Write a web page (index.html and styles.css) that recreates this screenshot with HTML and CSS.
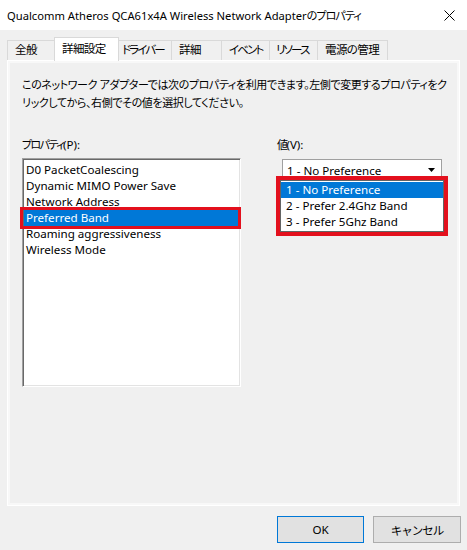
FILE: index.html
```html
<!DOCTYPE html>
<html lang="ja">
  <head>
    <meta charset="UTF-8" />
    <meta name="viewport" content="width=device-width, initial-scale=1.0" />
    <title>プロパティ</title>
    <link rel="stylesheet" href="styles.css">
  </head>
  <body>
    <div class="titlebar">
      <span class="title">Qualcomm Atheros QCA61x4A Wireless Network Adapter<span class="ja">のプロパティ</span></span>
      <svg class="close" width="11" height="11" viewBox="0 0 11 11">
        <path d="M0.5 0.5L10.5 10.5M10.5 0.5L0.5 10.5" stroke="#000" stroke-width="1" fill="none" />
      </svg>
    </div>
    <div class="dialog">
      <div class="tabs">
        <div class="tab tab-general">全般</div>
        <div class="tab tab-advanced active">詳細設定</div>
        <div class="tab tab-driver kana">ドライバー</div>
        <div class="tab tab-details">詳細</div>
        <div class="tab tab-events kana">イベント</div>
        <div class="tab tab-resources kana">リソース</div>
        <div class="tab tab-power">電源の管理</div>
      </div>
      <div class="panel">
        <p class="desc">このネットワーク アダプターでは次のプロパティを利用できます。左側で変更するプロパティをク<br>リックしてから、右側でその値を選択してください。</p>
        <div class="columns">
          <div class="col-left">
            <div class="label"><span class="ja">プロパティ</span>(P):</div>
            <ul class="listbox">
              <li>D0 PacketCoalescing</li>
              <li>Dynamic MIMO Power Save</li>
              <li>Network Address</li>
              <li class="selected">Preferred Band</li>
              <li>Roaming aggressiveness</li>
              <li>Wireless Mode</li>
            </ul>
          </div>
          <div class="col-right">
            <div class="label"><span class="ja">値</span>(V):</div>
            <div class="combo">
              <span class="combo-value">1 - No Preference</span>
              <svg class="arrow" width="7" height="4" viewBox="0 0 7 4">
                <path d="M0 0H7L3.5 4Z" fill="#000" />
              </svg>
              <ul class="dropdown">
                <li class="selected">1 - No Preference</li>
                <li>2 - Prefer 2.4Ghz Band</li>
                <li>3 - Prefer 5Ghz Band</li>
              </ul>
            </div>
          </div>
        </div>
      </div>
      <div class="buttons">
        <button class="btn btn-default">OK</button>
        <button class="btn ja">キャンセル</button>
      </div>
    </div>
  </body>
</html>
```

FILE: styles.css
```css
body {
  margin: 0;
  width: 467px;
  height: 550px;
  background-color: #f0f0f0;
  font-family: "Noto Sans", "Noto Sans CJK JP", sans-serif;
  font-size: 11.6px;
  font-feature-settings: "palt";
  color: #000;
  overflow: hidden;
}
.ja {
  font-size: 11px;
  letter-spacing: -0.9px;
}

.titlebar {
  display: flex;
  justify-content: space-between;
  align-items: center;
  height: 30px;
  padding: 0 12px 0 7px;
  background-color: #fff;
}
.title {
  font-size: 11.2px;
  white-space: nowrap;
}

.dialog {
  padding: 0 7px;
}

.tabs {
  display: flex;
  align-items: flex-end;
  height: 30px;
  position: relative;
  z-index: 1;
}
.tab {
  box-sizing: border-box;
  height: 20px;
  line-height: 18px;
  margin-right: -1px;
  padding-left: 7px;
  border: 1px solid #d9d9d9;
  border-bottom: none;
  background-color: #f0f0f0;
  font-size: 11.5px;
  letter-spacing: -0.6px;
  white-space: nowrap;
}
.tab.kana {
  letter-spacing: -1.9px;
}
.tab.active {
  height: 24px;
  line-height: 22px;
  margin-left: -3px;
  margin-right: -3px;
  margin-bottom: -1px;
  background-color: #fff;
  position: relative;
  z-index: 2;
}
.tab-general { width: 51px; }
.tab-advanced { width: 65px; }
.tab-driver { width: 56px; padding-left: 5px; }
.tab-details { width: 51px; }
.tab-events { width: 49px; }
.tab-resources { width: 49px; padding-left: 6px; }
.tab-power { width: 71px; }

.panel {
  box-sizing: border-box;
  height: 446px;
  padding: 15px 14px 0;
  border: 1px solid #fff;
  box-shadow: inset 0 0 0 2px #f8f8f8;
  background-color: #f0f0f0;
}
.desc {
  margin: 0;
  line-height: 18px;
  font-size: 11px;
  letter-spacing: -0.4px;
  white-space: nowrap;
}

.columns {
  display: flex;
  gap: 36px;
  margin-top: 24px;
}
.label {
  line-height: 18px;
}
.label .ja {
  letter-spacing: -1.6px;
}
.col-left {
  width: 219px;
}
.col-right {
  flex: 1;
}

.listbox {
  box-sizing: border-box;
  height: 229px;
  margin: 4px 0 0;
  padding: 3px 0 0;
  list-style: none;
  background-color: #fff;
  border: 1px solid;
  border-color: #a0a0a0 #fff #fff #a0a0a0;
  box-shadow: inset 1px 1px 0 #696969, inset -1px -1px 0 #e3e3e3;
}
.listbox li {
  height: 16px;
  line-height: 16px;
  margin: 0 2px 0 1px;
  padding-left: 2px;
  white-space: nowrap;
}
.listbox li.selected,
.dropdown li.selected {
  background-color: #0078d7;
  color: #fff;
}
.listbox li.selected {
  position: relative;
}
.listbox li.selected::after {
  content: "";
  position: absolute;
  top: -3px;
  bottom: -3px;
  left: -4px;
  right: -3px;
  border: 3px solid #e3101d;
}

.combo {
  box-sizing: border-box;
  display: flex;
  justify-content: space-between;
  align-items: center;
  width: 160px;
  height: 22px;
  margin: 5px 0 0 5px;
  padding: 0 6px 0 4px;
  border: 1px solid #a0a0a0;
  background-color: #fff;
  position: relative;
}
.combo-value {
  line-height: 17px;
  white-space: nowrap;
}

.dropdown {
  position: absolute;
  top: 100%;
  left: -3px;
  right: -3px;
  margin: 0;
  padding: 1px 0;
  list-style: none;
  background-color: #fff;
  border: 1px solid #646464;
  outline: 4px solid #e3101d;
}
.dropdown li {
  height: 16px;
  line-height: 16px;
  padding-left: 5px;
  white-space: nowrap;
}

.buttons {
  display: flex;
  justify-content: flex-end;
  gap: 9px;
  margin: 10px -1px 0 0;
}
.btn {
  box-sizing: border-box;
  width: 88px;
  height: 27px;
  padding: 0;
  font-family: inherit;
  font-size: 11.6px;
  color: #000;
  background-color: #e1e1e1;
  border: 1px solid #adadad;
}
.btn.ja {
  font-size: 11.5px;
  letter-spacing: -1px;
}
.btn-default {
  width: 87px;
  border-color: #0078d7;
}
```
